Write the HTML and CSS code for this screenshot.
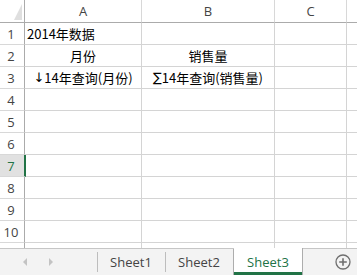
FILE: index.html
```html
<!DOCTYPE html>
<html>
<head>
<meta charset="utf-8">
<link rel="stylesheet" href="styles.css">
</head>
<body>
<div class="sheet">
  <div class="grid">
    <div class="corner"><div class="tri"></div></div>
    <div class="ch">A</div><div class="ch">B</div><div class="ch">C</div><div class="ch last"></div>

    <div class="rh">1</div><div class="c left">2014年数据</div><div class="c"></div><div class="c"></div><div class="c last"></div>
    <div class="rh">2</div><div class="c center">月份</div><div class="c center">销售量</div><div class="c"></div><div class="c last"></div>
    <div class="rh">3</div><div class="c center"><span class="sym">↓</span>14年查询(月份)</div><div class="c center"><span class="sym">∑</span>14年查询(销售量)</div><div class="c"></div><div class="c last"></div>
    <div class="rh">4</div><div class="c"></div><div class="c"></div><div class="c"></div><div class="c last"></div>
    <div class="rh">5</div><div class="c"></div><div class="c"></div><div class="c"></div><div class="c last"></div>
    <div class="rh">6</div><div class="c"></div><div class="c"></div><div class="c"></div><div class="c last"></div>
    <div class="rh sel">7</div><div class="c"></div><div class="c"></div><div class="c"></div><div class="c last"></div>
    <div class="rh">8</div><div class="c"></div><div class="c"></div><div class="c"></div><div class="c last"></div>
    <div class="rh">9</div><div class="c"></div><div class="c"></div><div class="c"></div><div class="c last"></div>
    <div class="rh">10</div><div class="c"></div><div class="c"></div><div class="c"></div><div class="c last"></div>
    <div class="rh">11</div><div class="c"></div><div class="c"></div><div class="c"></div><div class="c last"></div>
  </div>
  <div class="tabbar">
    <div class="nav">
      <span class="arrow al"></span>
      <span class="arrow ar"></span>
    </div>
    <div class="tab">Sheet1</div>
    <div class="tab">Sheet2</div>
    <div class="tab active">Sheet3</div>
    <div class="spacer"></div>
    <div class="add">
      <svg width="16" height="16" viewBox="0 0 16 16">
        <circle cx="8" cy="8" r="7" fill="none" stroke="#6f6f6f" stroke-width="1.3"/>
        <path d="M8 4.2V11.8M4.2 8H11.8" stroke="#6f6f6f" stroke-width="1.6"/>
      </svg>
    </div>
  </div>
</div>
</body>
</html>
```
FILE: styles.css
```css
html, body {
  margin: 0;
  padding: 0;
  background: #fff;
}
.sheet {
  width: 357px;
  height: 275px;
  overflow: hidden;
  display: flex;
  flex-direction: column;
  font-family: "Noto Sans CJK SC", sans-serif;
}
.grid {
  height: 248px;
  overflow: hidden;
  display: grid;
  grid-template-columns: 25px 117px 133px 72px 1fr;
  grid-template-rows: 23px repeat(11, 22px);
}
.corner {
  border-right: 1px solid #ababab;
  border-bottom: 1px solid #ababab;
  position: relative;
}
.tri {
  position: absolute;
  right: 2px;
  bottom: 2px;
  width: 0;
  height: 0;
  border-left: 8px solid transparent;
  border-bottom: 16px solid #dfdfdf;
}
.ch {
  border-right: 1px solid #d8d8d8;
  border-bottom: 1px solid #ababab;
  color: #444;
  font-family: "Open Sans", "Noto Sans", sans-serif;
  font-size: 13px;
  display: flex;
  align-items: center;
  justify-content: center;
}
.rh {
  border-right: 1px solid #ababab;
  border-bottom: 1px solid #d8d8d8;
  color: #444;
  font-family: "Open Sans", "Noto Sans", sans-serif;
  font-size: 13px;
  display: flex;
  align-items: center;
  justify-content: center;
  padding-right: 2px;
}
.rh.sel {
  background: #e1e1e1;
  color: #217346;
  border-right: 2px solid #217346;
  margin-right: -1px;
  position: relative;
}
.c {
  border-right: 1px solid #d4d4d4;
  border-bottom: 1px solid #d4d4d4;
  font-size: 13px;
  color: #000;
  display: flex;
  align-items: center;
  white-space: nowrap;
  overflow: visible;
}
.sym {
  font-family: "DejaVu Sans", sans-serif;
  font-size: 13px;
}
.c.left { padding-left: 2px; }
.c.center { justify-content: center; }
.last { border-right: none; }
.tabbar {
  flex: 1;
  border-top: 1px solid #c6c6c6;
  background: #f3f3f3;
  display: flex;
  align-items: stretch;
  font-family: "Open Sans", "Noto Sans", sans-serif;
  font-size: 13px;
  color: #444;
}
.nav {
  width: 97px;
  display: flex;
  align-items: center;
  gap: 22px;
  padding-left: 23px;
  box-sizing: border-box;
}
.arrow {
  width: 0;
  height: 0;
  border-top: 4px solid transparent;
  border-bottom: 4px solid transparent;
}
.al { border-right: 4px solid #c3c3c3; }
.ar { border-left: 4px solid #c3c3c3; }
.tab {
  width: 68px;
  display: flex;
  align-items: center;
  justify-content: center;
  position: relative;
}
.tab::before {
  content: "";
  position: absolute;
  left: 0;
  top: 3px;
  bottom: 3px;
  width: 1px;
  background: #bdbdbd;
}
.tab:nth-child(3) {
  border-right: 1px solid #adadad;
}
.tab.active {
  background: #fff;
  color: #217346;
  border-right: 1px solid #adadad;
  margin-top: -1px;
  box-shadow: inset 0 -3px 0 #217346;
}
.tab.active::before { display: none; }
.spacer { flex: 1; }
.add {
  width: 22px;
  display: flex;
  align-items: center;
  justify-content: flex-start;
}
```
